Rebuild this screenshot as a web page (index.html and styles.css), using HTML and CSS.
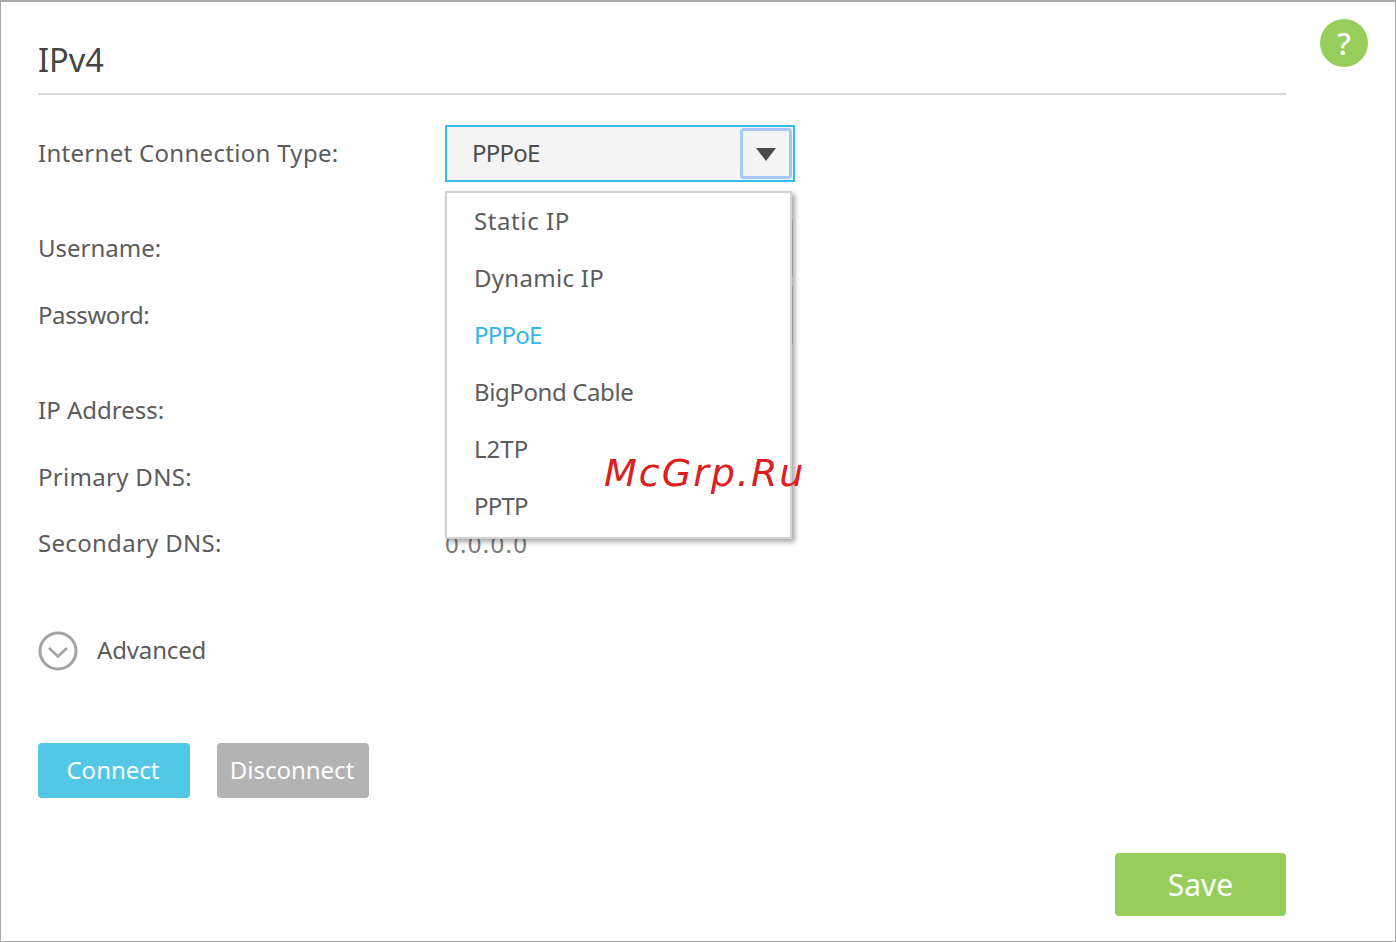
FILE: index.html
```html
<!DOCTYPE html>
<html lang="en">
<head>
<meta charset="utf-8">
<title>IPv4</title>
<link rel="stylesheet" href="styles.css">
</head>
<body>
<main class="panel">
  <a class="help" href="#" aria-label="Help">?</a>
  <h1 class="title">IPv4</h1>
  <div class="row row-type">
    <span class="label label-type wide">Internet Connection Type:</span>
    <div class="select-wrap">
      <div class="select">
        <span class="select-value narrow">PPPoE</span>
        <span class="select-btn"><svg width="20" height="13" viewBox="0 0 20 13"><path d="M0 0H20L10 13Z" fill="#4a4a4a"/></svg></span>
      </div>
      <ul class="menu">
        <li class="wider">Static IP</li>
        <li class="wide">Dynamic IP</li>
        <li class="active narrow">PPPoE</li>
        <li class="tight">BigPond Cable</li>
        <li>L2TP</li>
        <li class="narrow">PPTP</li>
      </ul>
    </div>
  </div>
  <div class="group group-auth">
    <div class="row"><span class="label">Username:</span><span class="field"></span></div>
    <div class="row"><span class="label tight">Password:</span><span class="field"></span></div>
  </div>
  <div class="group group-ip">
    <div class="row"><span class="label">IP Address:</span><span class="value">0.0.0.0</span></div>
    <div class="row"><span class="label wide">Primary DNS:</span><span class="value">0.0.0.0</span></div>
    <div class="row"><span class="label wide">Secondary DNS:</span><span class="value">0.0.0.0</span></div>
  </div>
  <div class="advanced">
    <svg class="adv-icon" width="40" height="40" viewBox="0 0 40 40"><circle cx="20" cy="20" r="18" fill="none" stroke="#a3a3a3" stroke-width="3"/><path d="M11 17l9 8.5 9-8.5" fill="none" stroke="#a3a3a3" stroke-width="2.6"/></svg>
    <span class="adv-label">Advanced</span>
  </div>
  <div class="actions">
    <button class="btn btn-connect">Connect</button>
    <button class="btn btn-disconnect">Disconnect</button>
  </div>
  <div class="footer"><button class="btn btn-save">Save</button></div>
</main>
<div class="watermark">McGrp.Ru</div>
</body>
</html>
```
FILE: styles.css
```css
* { box-sizing: border-box; }
html, body { margin: 0; padding: 0; background: #fff; }
body { width: 1396px; height: 942px; overflow: hidden; position: relative; font-family: "Noto Sans", sans-serif; color: #5c5c5c; }
.panel { position: relative; width: 1396px; height: 942px; padding: 0 110px 0 37px; border: 1px solid #a9a9a9; border-top-width: 2px; }
.help { position: absolute; left: 1319px; top: 17px; width: 48px; height: 48px; border-radius: 50%; background: #97cd5a; color: #fff; font-size: 31px; font-weight: 500; line-height: 48px; text-align: center; text-decoration: none; }
.title { margin: 0; height: 93px; padding-top: 37px; border-bottom: 2px solid #d9d9d9; font-size: 32.5px; font-weight: 400; line-height: 42px; color: #444; width: 1248px; }
.row { display: flex; align-items: center; height: 56px; }
.row-type { margin-top: 30px; height: 57px; }
.label { width: 407px; flex: none; font-size: 24px; line-height: 32px; }
.label-type { margin-bottom: 2px; }
.wide { letter-spacing: .3px; }
.wider { letter-spacing: .6px; }
.tight { letter-spacing: -.4px; }
.narrow { letter-spacing: -.8px; }
.select-wrap { position: relative; width: 350px; }
.select { display: flex; align-items: center; justify-content: space-between; height: 57px; background: #f4f4f4; border: 2px solid #35bdea; padding: 0 1px 0 25px; }
.select-value { font-size: 24px; line-height: 30px; margin-bottom: 2px; color: #4c4c4c; }
.select-btn { display: flex; align-items: center; justify-content: center; width: 52px; height: 51px; padding-top: 2px; border: 3px solid #a6c6fa; border-radius: 4px; }
.menu { position: absolute; z-index: 2; left: 0; top: 66px; width: 347px; height: 348px; margin: 0; padding: 0 0 0 27px; list-style: none; background: #fff; border: 2px solid #d2d2d2; box-shadow: 3px 3px 5px rgba(0,0,0,.35); }
.menu li { height: 57px; font-size: 24px; line-height: 56px; }
.menu .active { color: #35b4e6; }
.field { width: 348px; height: 58px; border: 2px solid #d9d9d9; }
.value { font-size: 24px; line-height: 34px; padding-top: 2px; letter-spacing: 1.3px; color: #7a7a7a; }
.group-auth { margin-top: 38px; display: flex; flex-direction: column; gap: 11px; }
.group-ip { margin-top: 39px; display: flex; flex-direction: column; gap: 10.5px; }
.advanced { display: flex; align-items: center; gap: 19px; margin-top: 56px; height: 44px; }
.adv-icon { margin-top: 4px; }
.adv-label { font-size: 24px; letter-spacing: -.15px; }
.actions { display: flex; gap: 27px; margin-top: 72px; }
.btn { border: none; border-radius: 4px; color: #fff; font-family: inherit; font-size: 24px; padding: 0 2px 2px 0; }
.btn-connect { width: 152px; height: 55px; background: #53c8e6; }
.btn-disconnect { width: 152px; height: 55px; background: #b3b3b3; }
.footer { display: flex; justify-content: flex-end; margin-top: 55px; width: 1248px; }
.btn-save { width: 171px; height: 63px; background: #97cd5a; font-size: 30px; padding: 0; }
.watermark { position: absolute; z-index: 5; left: 604px; top: 451px; font-family: "DejaVu Sans", sans-serif; font-style: italic; font-size: 38px; letter-spacing: 2px; color: #dc2020; }
```
